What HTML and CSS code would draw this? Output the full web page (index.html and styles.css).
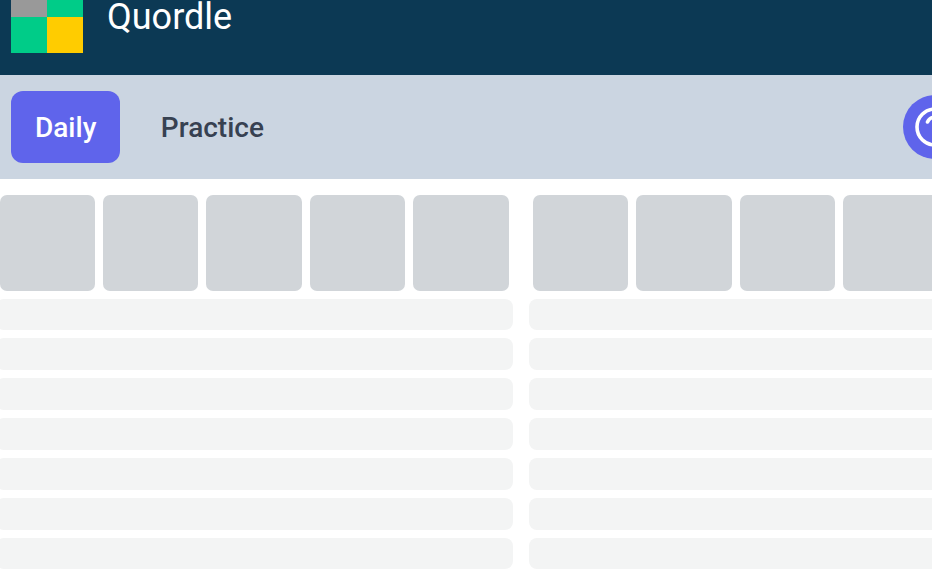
FILE: index.html
```html
<!DOCTYPE html>
<html lang="en">
<head>
<meta charset="utf-8">
<title>Quordle</title>
<link rel="stylesheet" href="styles.css">
</head>
<body>
<header class="header">
  <div class="logo">
    <span class="logo-gray"></span>
    <span class="logo-green"></span>
    <span class="logo-green"></span>
    <span class="logo-yellow"></span>
  </div>
  <h1 class="title">Quordle</h1>
</header>
<nav class="nav">
  <a class="tab tab-active">Daily</a>
  <a class="tab">Practice</a>
  <button class="help" aria-label="Help">
    <svg class="help-icon" viewBox="0 0 64 64" width="64" height="64">
      <circle cx="32" cy="32" r="32" fill="#5f64eb"/>
      <circle cx="32" cy="32" r="18" fill="none" stroke="#fff" stroke-width="3.6"/>
      <path d="M24.5 27a8 8 0 0 1 15 1c0 5-7 5-7 10" fill="none" stroke="#fff" stroke-width="3.6" stroke-linecap="round"/>
    </svg>
  </button>
</nav>
<main class="boards">
  <section class="board">
    <div class="tiles"><div class="tile"></div><div class="tile"></div><div class="tile"></div><div class="tile"></div><div class="tile"></div></div>
    <div class="line"></div><div class="line"></div><div class="line"></div><div class="line"></div><div class="line"></div><div class="line"></div><div class="line"></div>
  </section>
  <section class="board">
    <div class="tiles"><div class="tile"></div><div class="tile"></div><div class="tile"></div><div class="tile"></div><div class="tile"></div></div>
    <div class="line"></div><div class="line"></div><div class="line"></div><div class="line"></div><div class="line"></div><div class="line"></div><div class="line"></div>
  </section>
</main>
</body>
</html>
```
FILE: styles.css
```css
* { box-sizing: border-box; }
html, body { margin: 0; height: 100%; overflow: hidden; background: #fff; }
body { font-family: Roboto, "Liberation Sans", sans-serif; width: 932px; height: 570px; }

.header {
  display: flex;
  align-items: flex-start;
  gap: 24px;
  height: 94px;
  margin-top: -19px;
  padding-left: 11px;
  background: #0c3954;
}
.logo {
  display: grid;
  grid-template-columns: 36px 36px;
  grid-template-rows: 36px 36px;
  flex: none;
}
.logo-gray { background: #999999; }
.logo-green { background: #00cc88; }
.logo-yellow { background: #ffcc00; }
.title {
  margin: 16px 0 0;
  font-size: 36px;
  line-height: 40px;
  font-weight: 400;
  color: #fff;
}

.nav {
  display: flex;
  align-items: center;
  width: 967px;
  height: 104px;
  padding-left: 11px;
  background: #cbd5e1;
}
.tab {
  display: flex;
  align-items: center;
  justify-content: center;
  height: 72px;
  padding: 0 24px;
  margin-right: 16.5px;
  border-radius: 12px;
  font-size: 28px;
  font-weight: 500;
  color: #374151;
}
.tab-active { background: #5f64eb; color: #fff; }
.help {
  margin-left: auto;
  padding: 0;
  border: 0;
  background: none;
  width: 64px;
  height: 64px;
  flex: none;
}
.help-icon { display: block; }

.boards {
  display: flex;
  gap: 16.2px;
  width: 1060px;
  margin-left: -4.4px;
  padding-top: 16px;
}
.board {
  display: flex;
  flex-direction: column;
  gap: 8px;
  width: 517px;
  flex: none;
}
.tiles {
  display: grid;
  grid-template-columns: repeat(5, 1fr);
  gap: 8px;
  padding: 0 4px;
}
.tile {
  height: 95.6px;
  border-radius: 7px;
  background: #d1d5d9;
}
.line {
  height: 31.83px;
  border-radius: 8px;
  background: #f3f4f4;
}
```
